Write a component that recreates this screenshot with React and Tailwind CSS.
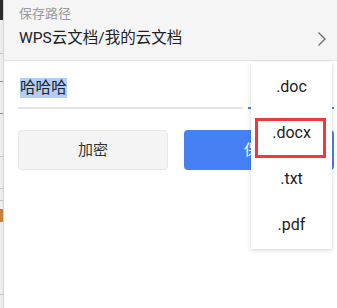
const cjk = { fontFamily: 'Roboto, "Noto Sans CJK SC", sans-serif' }

function Chevron() {
  return (
    <svg width="10" height="16" viewBox="0 0 10 16" fill="none" className="mr-[10px]">
      <path d="M1.5 1.5 L8 8 L1.5 14.5" stroke="#707070" strokeWidth="1.4" />
    </svg>
  )
}

function SideStrip() {
  return (
    <div className="flex w-[4px] shrink-0 flex-col border-r border-[#d4d4d4] bg-[#ececec]">
      <div className="h-[20px] bg-[#2b2b2b]" />
      <div className="h-[33px]" />
      <div className="h-px bg-[#c4c4c4]" />
      <div className="h-[27px]" />
      <div className="h-px bg-[#5cb85c]" />
      <div className="h-[31px]" />
      <div className="h-px bg-[#5cb85c]" />
      <div className="h-[42px]" />
      <div className="h-px bg-[#c4c4c4]" />
      <div className="h-[31px]" />
      <div className="h-px bg-[#c4c4c4]" />
      <div className="h-[11px]" />
      <div className="h-px bg-[#c4c4c4]" />
      <div className="h-[8px]" />
      <div className="h-[13px] bg-[#c8803c]" />
      <div className="h-[72px]" />
      <div className="h-px bg-[#c4c4c4]" />
    </div>
  )
}

export default function App() {
  const exts = ['.doc', '.docx', '.txt', '.pdf']

  return (
    <div className="relative flex h-[308px] w-[337px] overflow-hidden bg-white" style={cjk}>
      <SideStrip />
      <div className="flex min-w-0 flex-1 flex-col">
        <div className="h-[61px] border-b border-[#e4e4e4] bg-[#f5f5f5] pl-[15px] pt-[5px]">
          <div className="text-[13px] leading-[18px] text-[#9a9a9a]">保存路径</div>
          <div className="flex h-[31px] items-center justify-between">
            <span className="text-[15.5px] text-[#222]">WPS云文档/我的云文档</span>
            <Chevron />
          </div>
        </div>

        <div className="ml-[14px] flex items-end">
          <div className="w-[225px] border-b-2 border-[#e3e3e3] pb-[7px] pl-[2px] pt-[15px]">
            <span className="inline-block bg-[#b3cdfa] text-[15.6px] leading-[20px] text-[#222]">哈哈哈</span>
          </div>
          <div className="ml-[5px] flex h-[44px] w-[86px] items-center border-b-2 border-[#3b7cf5] pl-[2px] text-[16px] text-[#444]">
            .
          </div>
        </div>

        <div className="ml-[14px] mt-[21px] flex gap-[16px]">
          <button className="flex h-[40px] w-[150px] shrink-0 items-center justify-center rounded-[4px] border border-[#e6e6e6] bg-[#f4f4f4] text-[15px] text-[#333]">
            加密
          </button>
          <button className="flex h-[40px] w-[150px] shrink-0 items-center justify-center rounded-[4px] bg-[#4581f5] text-[15px] text-white">
            保存
          </button>
        </div>
      </div>

      <div className="absolute left-[251px] top-[62px] flex w-[81px] flex-col bg-white pb-px pt-[2px] shadow-[0_1px_4px_rgba(0,0,0,0.18)]">
        {exts.map((e) => (
          <div key={e} className="flex h-[46px] items-center justify-center text-[16px] text-[#222]">
            {e}
          </div>
        ))}
      </div>

      <div className="absolute left-[255px] top-[118px] h-[40px] w-[71px] border-[3px] border-[#ef3a3a]" />
    </div>
  )
}
